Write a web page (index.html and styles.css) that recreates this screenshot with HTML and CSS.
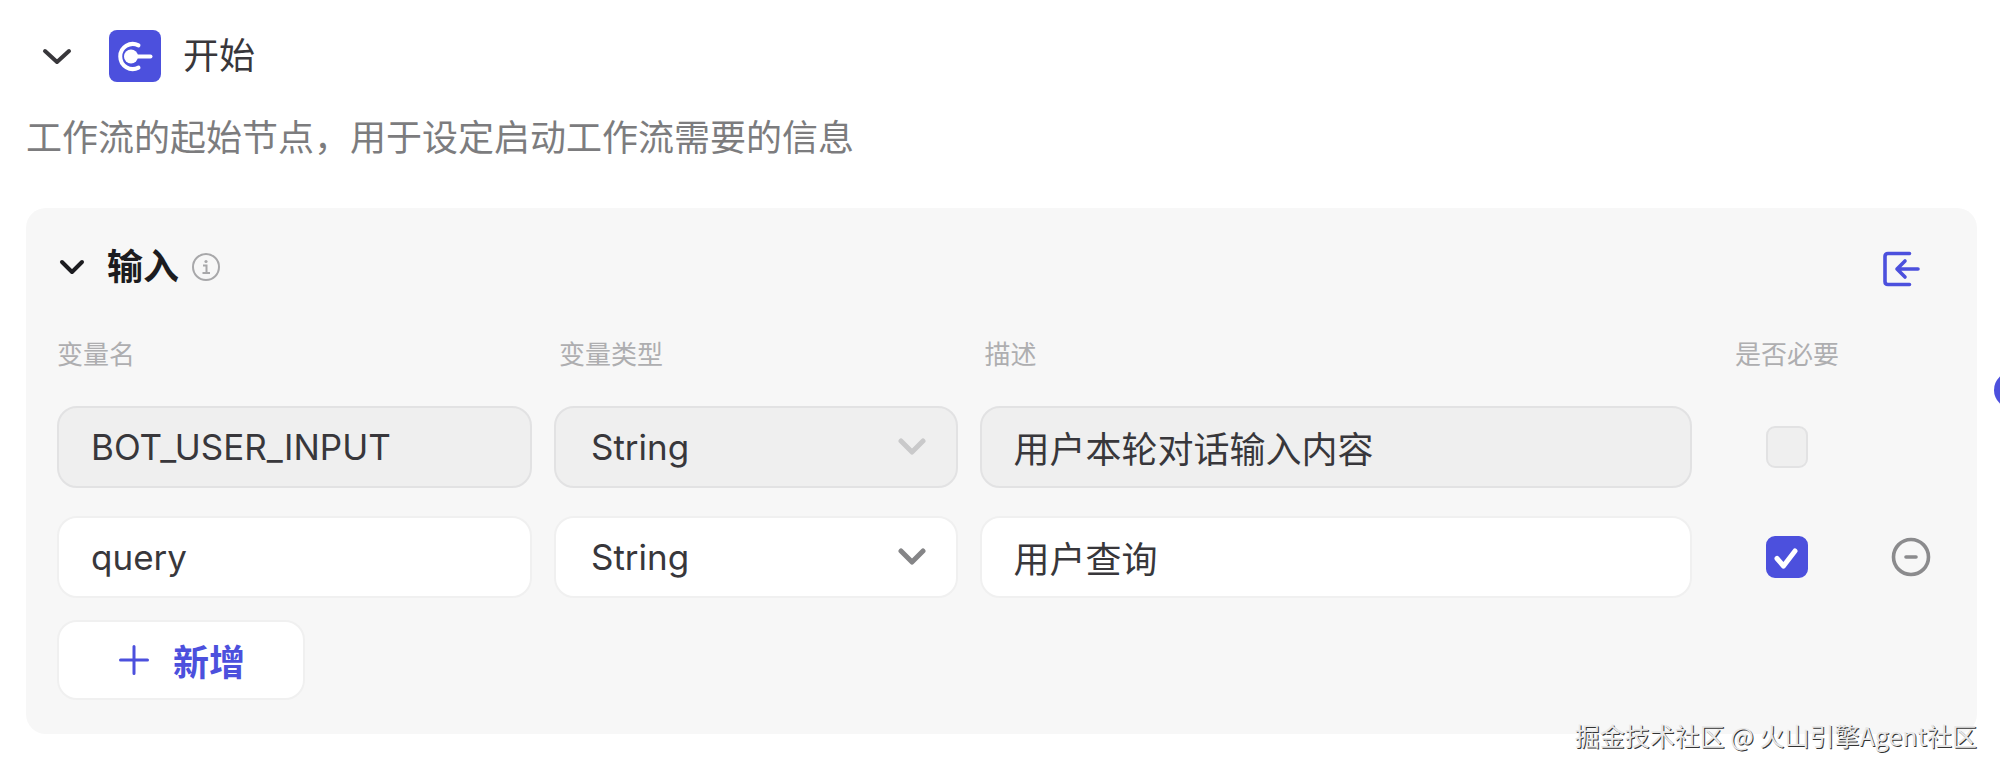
FILE: index.html
```html
<!DOCTYPE html>
<html lang="zh-CN">

<head>
    <meta charset="UTF-8">
    <meta name="viewport" content="width=device-width, initial-scale=1.0">
    <title>开始</title>
    <link rel="stylesheet" href="styles.css">
</head>

<body>
    <main class="node">
        <header class="node-header">
            <button class="icon-btn" type="button" aria-label="收起节点">
                <svg width="32" height="32" viewBox="0 0 32 32" fill="none" stroke="#38373b" stroke-width="4" stroke-linecap="round" stroke-linejoin="round">
                    <path d="M4 11l12 11 12-11" />
                </svg>
            </button>
            <svg class="node-icon" viewBox="0 0 52 52" fill="none">
                <rect width="52" height="52" rx="8" fill="#4c50dd" />
                <path d="M29.500 15.400A12.500 12.500 0 1 0 29.500 37.600" stroke="#fff" stroke-width="4" stroke-linecap="round" />
                <circle cx="22" cy="26.500" r="7" fill="#fff" />
                <path d="M22 26.500h19.500" stroke="#fff" stroke-width="4" stroke-linecap="round" />
            </svg>
            <h1>开始</h1>
        </header>
        <p class="node-desc">工作流的起始节点，用于设定启动工作流需要的信息</p>

        <section class="panel">
            <div class="panel-header">
                <button class="icon-btn" type="button" aria-label="收起输入">
                    <svg width="30" height="30" viewBox="0 0 30 30" fill="none" stroke="#1c1c20" stroke-width="4" stroke-linecap="round" stroke-linejoin="round">
                        <path d="M5 10l10 10 10-10" />
                    </svg>
                </button>
                <h2>输入</h2>
                <svg class="info" width="30" height="30" viewBox="0 0 30 30" fill="none" stroke="#a8a8aa" stroke-width="2">
                    <circle cx="15" cy="15" r="13" />
                    <path d="M12 13.500h3.500v7M11.500 21h7.500" />
                    <circle cx="15" cy="9.500" r="1.600" fill="#a8a8aa" stroke="none" />
                </svg>
                <button class="icon-btn import" type="button" aria-label="导入">
                    <svg width="38" height="38" viewBox="0 0 38 38" fill="none" stroke="#4c50dd" stroke-width="3.600" stroke-linecap="round" stroke-linejoin="round">
                        <path d="M27.500 3.500H6q-3 0-3 3v25q0 3 3 3h21.500" />
                        <path d="M36 19H15M23 11l-8 8 8 8" />
                    </svg>
                </button>
            </div>

            <table>
                <thead>
                    <tr>
                        <th>变量名</th>
                        <th>变量类型</th>
                        <th>描述</th>
                        <th class="center">是否必要</th>
                    </tr>
                </thead>
                <tbody>
                    <tr>
                        <td><input class="field" type="text" aria-label="变量名" value="BOT_USER_INPUT" disabled></td>
                        <td class="select">
                            <select class="field" aria-label="变量类型" disabled>
                                <option>String</option>
                            </select>
                            <svg class="arrow" viewBox="0 0 28 18"><path d="M3 3l11 11L25 3" /></svg>
                        </td>
                        <td><input class="field desc" type="text" aria-label="描述" value="用户本轮对话输入内容" disabled></td>
                        <td class="center"><input class="check" type="checkbox" aria-label="是否必要" disabled></td>
                    </tr>
                    <tr>
                        <td><input class="field" type="text" aria-label="变量名" value="query"></td>
                        <td class="select">
                            <select class="field" aria-label="变量类型">
                                <option>String</option>
                            </select>
                            <svg class="arrow" viewBox="0 0 28 18"><path d="M3 3l11 11L25 3" /></svg>
                        </td>
                        <td><input class="field desc" type="text" aria-label="描述" value="用户查询"></td>
                        <td class="center check-cell">
                            <input class="check" type="checkbox" aria-label="是否必要" checked>
                            <svg class="tick" viewBox="0 0 42 42"><path d="M11 22.500l6.500 7.500L29 15" /></svg>
                        </td>
                        <td class="center">
                            <button class="icon-btn" type="button" aria-label="删除">
                                <svg width="40" height="40" viewBox="0 0 40 40" fill="none" stroke="#8b8b8d" stroke-width="3.600" stroke-linecap="round">
                                    <circle cx="20" cy="20" r="17.500" />
                                    <path d="M15 20h10" />
                                </svg>
                            </button>
                        </td>
                    </tr>
                </tbody>
            </table>

            <button class="add" type="button">
                <svg width="30" height="30" viewBox="0 0 30 30" stroke="#4c50dd" stroke-width="3" stroke-linecap="round">
                    <path d="M15 1.500v27M1.500 15h27" />
                </svg>
                新增
            </button>
        </section>

        <span class="port"></span>
        <div class="watermark">掘金技术社区 @ 火山引擎Agent社区</div>
    </main>
</body>

</html>
```
FILE: styles.css
```css
* {
    box-sizing: border-box;
}

body {
    margin: 0;
    background-color: #fff;
    color: #38373b;
    font-family: Inter, "Noto Sans CJK SC", sans-serif;
    font-size: 36px;
}

button,
input,
select {
    font: inherit;
    color: inherit;
}

h1,
h2,
p {
    margin: 0;
    font-size: 36px;
    line-height: 52px;
}

.node {
    position: relative;
    overflow: hidden;
    padding: 30px 23px 40px 26px;
}

.node-header {
    display: flex;
    align-items: center;
    padding-left: 15px;
}

.node-icon {
    width: 52px;
    height: 52px;
    margin: 0 22px 0 36px;
}

h1 {
    font-weight: 400;
}

.node-desc {
    margin-top: 30px;
    color: #7c7c7e;
}

.icon-btn {
    display: flex;
    padding: 0;
    border: none;
    background: none;
    cursor: pointer;
}

.panel {
    margin-top: 44px;
    padding: 33px 37px 34px 31px;
    border-radius: 20px;
    background-color: #f7f7f7;
}

.panel-header {
    display: flex;
    align-items: center;
}

.panel-header h2 {
    margin: 0 12px 0 20px;
    font-weight: 700;
    color: #1c1c20;
}

.import {
    margin: 4px 20px 0 auto;
}

table,
thead,
tbody {
    display: block;
}

/* name | type | description | required | remove */
tr {
    display: grid;
    grid-template-columns: 20fr 17fr 30fr 146px 58px;
    column-gap: 22px;
    align-items: center;
}

th,
td {
    padding: 0;
}

thead tr {
    padding: 43px 0 32px;
}

th {
    padding-left: 5px;
    font-size: 26px;
    font-weight: 400;
    line-height: 38px;
    text-align: left;
    color: #aeaeb0;
}

th:first-child {
    padding-left: 0;
}

th.center {
    padding-left: 0;
    text-align: center;
}

tbody tr {
    margin-bottom: 28px;
}

td.center {
    display: flex;
    justify-content: center;
}

.field {
    display: block;
    width: 100%;
    height: 82px;
    padding: 0 32px;
    border: 2px solid #f0f0f0;
    border-radius: 20px;
    outline: none;
    background-color: #fff;
    font-size: 35px;
    appearance: none;
}

.desc {
    font-size: 36px;
}

.field:disabled {
    border-color: #e2e2e3;
    background-color: #efefef;
    color: #38373b;
    opacity: 1;
}

.select,
.check-cell {
    position: relative;
}

.select .field {
    padding-left: 35px;
}

.arrow {
    position: absolute;
    top: 32px;
    right: 32px;
    width: 28px;
    height: 18px;
    fill: none;
    stroke: #858587;
    stroke-width: 5;
    stroke-linecap: round;
    stroke-linejoin: round;
    pointer-events: none;
}

.field:disabled + .arrow {
    stroke: #c9c9ca;
}

.check {
    width: 42px;
    height: 42px;
    margin: 0;
    border: 2px solid #e2e2e3;
    border-radius: 9px;
    background-color: #efefef;
    appearance: none;
}

.check:checked {
    border-color: #4c50dd;
    background-color: #4c50dd;
}

.tick {
    position: absolute;
    width: 42px;
    height: 42px;
    fill: none;
    stroke: #fff;
    stroke-width: 5;
    stroke-linecap: round;
    stroke-linejoin: round;
    pointer-events: none;
}

.add {
    display: flex;
    align-items: center;
    gap: 24px;
    height: 80px;
    margin-top: -6px;
    padding: 0 58px 0 60px;
    border: 2px solid #f0f0f0;
    border-radius: 20px;
    background-color: #fff;
    color: #4c50dd;
    font-weight: 700;
    cursor: pointer;
}

/* connector on the edge of the node */
.port {
    position: absolute;
    top: 372px;
    right: -30px;
    width: 36px;
    height: 36px;
    border-radius: 50%;
    background-color: #4c50dd;
}

.watermark {
    position: absolute;
    right: 23px;
    bottom: 20px;
    color: #e8e8e8;
    font-family: "Noto Sans CJK SC", sans-serif;
    font-size: 25px;
    line-height: 38px;
    text-shadow: 1px 1px 0 #333;
}
```
